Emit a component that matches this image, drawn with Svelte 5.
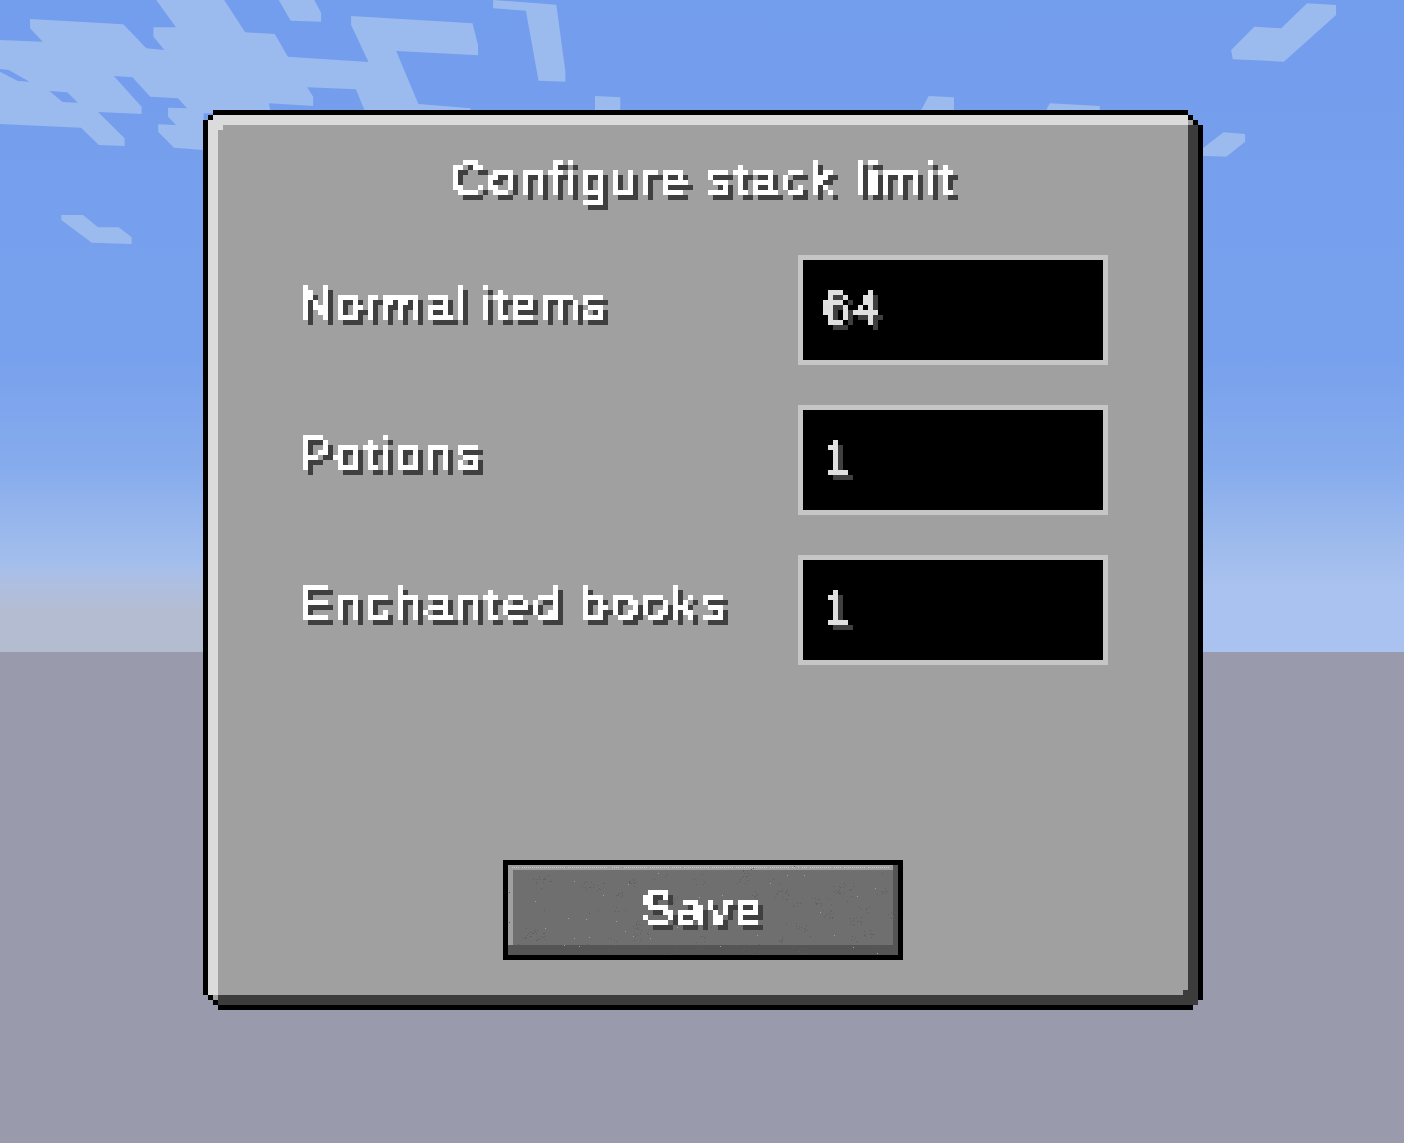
<script>
  function rng(seed) {
    let s = seed;
    return () => {
      s = (s * 1664525 + 1013904223) >>> 0;
      return s / 4294967296;
    };
  }
  const r = rng(77);
  const specks = [];
  for (let c = 0; c < 42; c++) {
    const cx = 8 + r() * 375, cy = 2 + r() * 84;
    const n = 4 + Math.floor(r() * 9);
    for (let i = 0; i < n; i++) {
      specks.push({ x: Math.round(cx + r() * 12), y: Math.round(cy + r() * 8), f: '#5f5f5f' });
    }
  }
  for (let i = 0; i < 70; i++) {
    specks.push({ x: Math.round(r() * 388), y: Math.round(r() * 88), f: r() > 0.5 ? '#a0a0a0' : '#5c5c5c' });
  }
  for (let x = 4; x < 382; x += 2) {
    if (r() > 0.08) specks.push({ x, y: 2, f: '#c8c8c8' });
  }
  const rows = [
    { label: 'Normal items', value: '64', cls: 'tight' },
    { label: 'Potions', value: '1', cls: '' },
    { label: 'Enchanted books', value: '1', cls: 'wide' }
  ];
</script>

<div class="stage">
  <svg class="scene" width="1404" height="1143" viewBox="0 0 1404 1143" aria-hidden="true">
    <defs>
      <linearGradient id="sky" x1="0" y1="0" x2="0" y2="1">
        <stop offset="0" stop-color="#739ded" />
        <stop offset="0.55" stop-color="#78a1ed" />
        <stop offset="0.72" stop-color="#87aced" />
        <stop offset="0.83" stop-color="#9dbaec" />
        <stop offset="0.9" stop-color="#a9c2ef" />
        <stop offset="1" stop-color="#a9c2ef" />
      </linearGradient>
      <linearGradient id="haze" x1="0" y1="0" x2="0" y2="1">
        <stop offset="0" stop-color="#b4bcd2" stop-opacity="0" />
        <stop offset="0.55" stop-color="#b4bcd2" stop-opacity="1" />
        <stop offset="1" stop-color="#b4bcd0" stop-opacity="1" />
      </linearGradient>
    </defs>
    <rect width="1404" height="652" fill="url(#sky)" />
    <rect x="0" y="560" width="210" height="92" fill="url(#haze)" />
    <rect y="652" width="1404" height="491" fill="#999bad" />
    <g fill="#9bbaee" transform="scale(0.3954 0.3333)">
      <path d="M0,120 L108,125 L76,85 L76,57 L312,73 L370,145 L416,150 L388,110 L388,82 L445,82 L395,0 L567,0 L620,97 L695,102 L728,170 L932,186 L888,75 L888,48 L1195,70 L1209,135 L1209,166 L1002,153 L1058,312 L1190,325 L1190,340 L925,340 L900,268 L777,262 L792,290 L792,318 L680,310 L685,340 L515,340 L515,450 L440,443 L400,395 L400,373 L445,375 L425,350 L425,323 L473,325 L450,295 L380,290 L335,232 L288,228 L358,320 L358,342 L248,336 L315,415 L315,438 L250,435 L205,383 L0,372 Z M0,207 L22,210 L75,245 L45,243 L0,215 Z M125,273 L170,277 L197,308 L158,306 Z" fill-rule="evenodd" />
      <path d="M705,0 L795,0 L812,38 L812,65 L735,62 Z" />
      <path d="M1247,0 L1407,14 L1430,215 L1430,245 L1362,242 L1330,32 L1247,25 Z" />
      <path d="M155,645 L210,645 L248,682 L300,682 L333,712 L333,732 L232,728 L155,660 Z" />
    </g>
    <g fill="#9bbaee" transform="translate(560 0) scale(0.5382 0.3333)">
      <path d="M1388,10 L1442,15 L1442,45 L1345,185 L1250,178 L1247,150 L1290,80 L1340,85 Z" />
      <path d="M65,288 L112,292 L112,340 L65,340 Z" />
      <path d="M685,288 L732,292 L732,340 L668,340 Z" />
      <path d="M910,310 L1003,318 L1003,340 L900,340 Z" />
      <path d="M1233,397 L1273,402 L1273,425 L1238,470 L1190,467 L1190,450 Z" />
    </g>
  </svg>

  <svg class="defs" width="0" height="0" aria-hidden="true">
    <filter id="pixel" x="0" y="0" width="100%" height="100%" color-interpolation-filters="sRGB">
      <feFlood x="2" y="2" width="1" height="1" flood-color="#000" />
      <feComposite x="0" y="0" width="5" height="5" />
      <feTile result="grid" />
      <feComposite in="SourceGraphic" in2="grid" operator="in" />
      <feComponentTransfer>
        <feFuncA type="discrete" tableValues="0 1" />
      </feComponentTransfer>
      <feMorphology operator="dilate" radius="2" result="px" />
      <feOffset in="px" dx="5" dy="5" result="off" />
      <feFlood flood-color="#3f3f3f" />
      <feComposite in2="off" operator="in" result="shadow" />
      <feMerge>
        <feMergeNode in="shadow" />
        <feMergeNode in="px" />
      </feMerge>
    </filter>
  </svg>

  <section class="window">
    <div class="corner tl"></div>
    <div class="edge light"></div>
    <div class="corner tr"></div>
    <div class="edge light"></div>
    <div class="body">
      <h1 class="title mc">Configure stack limit</h1>
      <div class="rows">
        {#each rows as row}
          <div class="row">
            <span class="label mc {row.cls}">{row.label}</span>
            <div class="field">
              <input class="mc value" type="text" value={row.value} aria-label={row.label} />
            </div>
          </div>
        {/each}
      </div>
      <button class="save" type="button">
        <svg class="noise" width="390" height="90" viewBox="0 0 390 90" aria-hidden="true">
          {#each specks as s}
            <rect x={s.x} y={s.y} width="1" height="1" fill={s.f} />
          {/each}
        </svg>
        <span class="mc savetext">Save</span>
      </button>
    </div>
    <div class="edge dark"></div>
    <div class="corner bl"></div>
    <div class="edge dark"></div>
    <div class="corner br"></div>
  </section>
</div>

<style>
  :global(body) {
    margin: 0;
    background: #999bad;
  }
  .stage {
    position: relative;
    width: 1404px;
    height: 1143px;
    overflow: hidden;
    padding: 110px 0 0 203px;
    box-sizing: border-box;
  }
  .scene {
    position: absolute;
    left: 0;
    top: 0;
  }
  .defs {
    position: absolute;
  }
  .window {
    position: relative;
    width: 1000px;
    height: 900px;
    box-sizing: border-box;
    padding: 5px;
    background: #000;
    clip-path: polygon(10px 0, 985px 0, 985px 5px, 990px 5px, 990px 10px, 995px 10px, 995px 15px, 1000px 15px, 1000px 890px, 995px 890px, 995px 895px, 990px 895px, 990px 900px, 15px 900px, 15px 895px, 10px 895px, 10px 890px, 5px 890px, 5px 885px, 0 885px, 0 10px, 5px 10px, 5px 5px, 10px 5px);
    display: grid;
    grid-template-columns: 10px 1fr 10px;
    grid-template-rows: 10px 1fr 10px;
  }
  .light { background: #dbdbdb; }
  .dark { background: #3c3c3c; }
  .corner.tl {
    background: linear-gradient(#000, #000) 0 0 / 5px 5px no-repeat, #dbdbdb;
  }
  .corner.tr {
    background: linear-gradient(#a0a0a0, #a0a0a0) 0 100% / 5px 5px no-repeat, #000;
  }
  .corner.bl {
    background: linear-gradient(#a0a0a0, #a0a0a0) 100% 0 / 5px 5px no-repeat, #000;
  }
  .corner.br {
    background: #3c3c3c;
  }
  .body {
    position: relative;
    background: #a0a0a0;
    display: flex;
    flex-direction: column;
    padding: 25px 0 35px;
    box-sizing: border-box;
    min-height: 0;
  }
  .body::before,
  .body::after {
    content: "";
    position: absolute;
    width: 5px;
    height: 5px;
  }
  .body::before {
    left: 0;
    top: 0;
    background: #dbdbdb;
  }
  .body::after {
    right: 0;
    bottom: 0;
    background: #3c3c3c;
  }
  .mc {
    font-family: "Liberation Sans", Arial, sans-serif;
    font-size: 49px;
    font-weight: 400;
    line-height: 57px;
    letter-spacing: 3.1px;
    color: #fff;
    -webkit-text-stroke: 1px currentColor;
    filter: url(#pixel);
    display: block;
    margin: 0;
  }
  .title {
    height: 60px;
    text-align: center;
  }
  .rows {
    margin-top: 45px;
    display: flex;
    flex-direction: column;
    gap: 40px;
    padding: 0 80px 0 80px;
  }
  .row {
    display: flex;
    justify-content: space-between;
    align-items: flex-start;
  }
  .label {
    margin-top: 20px;
    height: 60px;
    padding-right: 10px;
  }
  .tight {
    letter-spacing: 1.7px;
  }
  .wide {
    letter-spacing: 3.4px;
  }
  .field {
    width: 310px;
    height: 110px;
    box-sizing: border-box;
    border: 5px solid #c6c6c6;
    background: #000;
    padding: 20px 20px 0;
  }
  .value {
    width: 100%;
    height: 60px;
    border: 0;
    outline: 0;
    padding: 0 0 6px;
    box-sizing: border-box;
    background: transparent;
    color: #e0e0e0;
  }
  .save {
    position: relative;
    margin: auto auto 0;
    width: 400px;
    height: 100px;
    box-sizing: border-box;
    border: 5px solid #000;
    padding: 15px 0;
    background: #6f6f6f;
    box-shadow: inset -5px -10px 0 #555, inset 5px 5px 0 #a0a0a0;
    display: block;
  }
  .noise {
    position: absolute;
    left: 0;
    top: 0;
  }
  .savetext {
    position: relative;
    height: 60px;
    text-align: center;
  }
</style>
